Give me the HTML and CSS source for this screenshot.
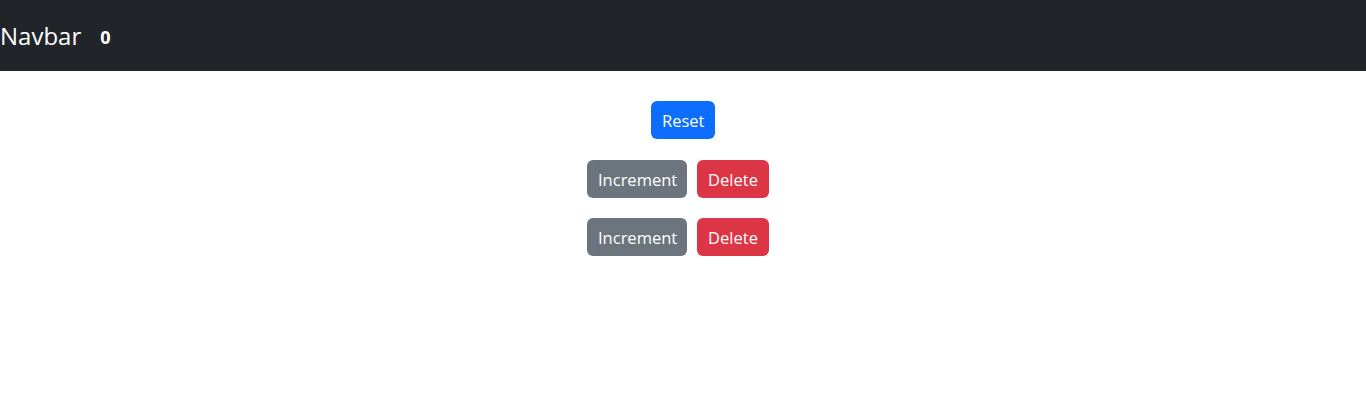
FILE: index.html
```html
<!DOCTYPE html>
<html>
<head>
<meta charset="utf-8">
<link rel="stylesheet" href="styles.css">
</head>
<body>
<nav class="navbar">
  <span class="brand">Navbar</span>
  <span class="badge">0</span>
</nav>
<main class="content">
  <div class="row row-first"><button class="btn btn-primary">Reset</button></div>
  <div class="row row-pair">
    <button class="btn btn-secondary">Increment</button>
    <button class="btn btn-danger">Delete</button>
  </div>
  <div class="row row-pair">
    <button class="btn btn-secondary">Increment</button>
    <button class="btn btn-danger">Delete</button>
  </div>
</main>
</body>
</html>
```
FILE: styles.css
```css
* { box-sizing: border-box; }
body {
  margin: 0;
  font-family: "Open Sans", "Noto Sans", sans-serif;
  font-size: 16px;
  color: #212529;
  background: #fff;
}
.navbar {
  height: 71px;
  background: #212529;
  display: flex;
  align-items: center;
  color: #fff;
}
.brand {
  font-size: 24px;
  padding-left: 0;
}
.badge {
  font-size: 18px;
  font-weight: 700;
  margin-left: 19px;
  padding-top: 3px;
}
.content {
  display: flex;
  flex-direction: column;
  align-items: center;
  padding-top: 30px;
}
.row {
  display: flex;
  gap: 10px;
  margin-bottom: 20px;
}
.row-first { margin-bottom: 21px; }
.row-pair { padding-right: 10px; }
.btn {
  font-family: inherit;
  font-size: 16.5px;
  height: 38px;
  padding: 0 11px;
  border: none;
  border-radius: 6px;
  color: #fff;
  cursor: pointer;
}
.btn-primary { background: #0d6efd; width: 64px; }
.btn-secondary { background: #6c757d; width: 100px; }
.btn-danger { background: #dc3545; width: 72px; }
```
